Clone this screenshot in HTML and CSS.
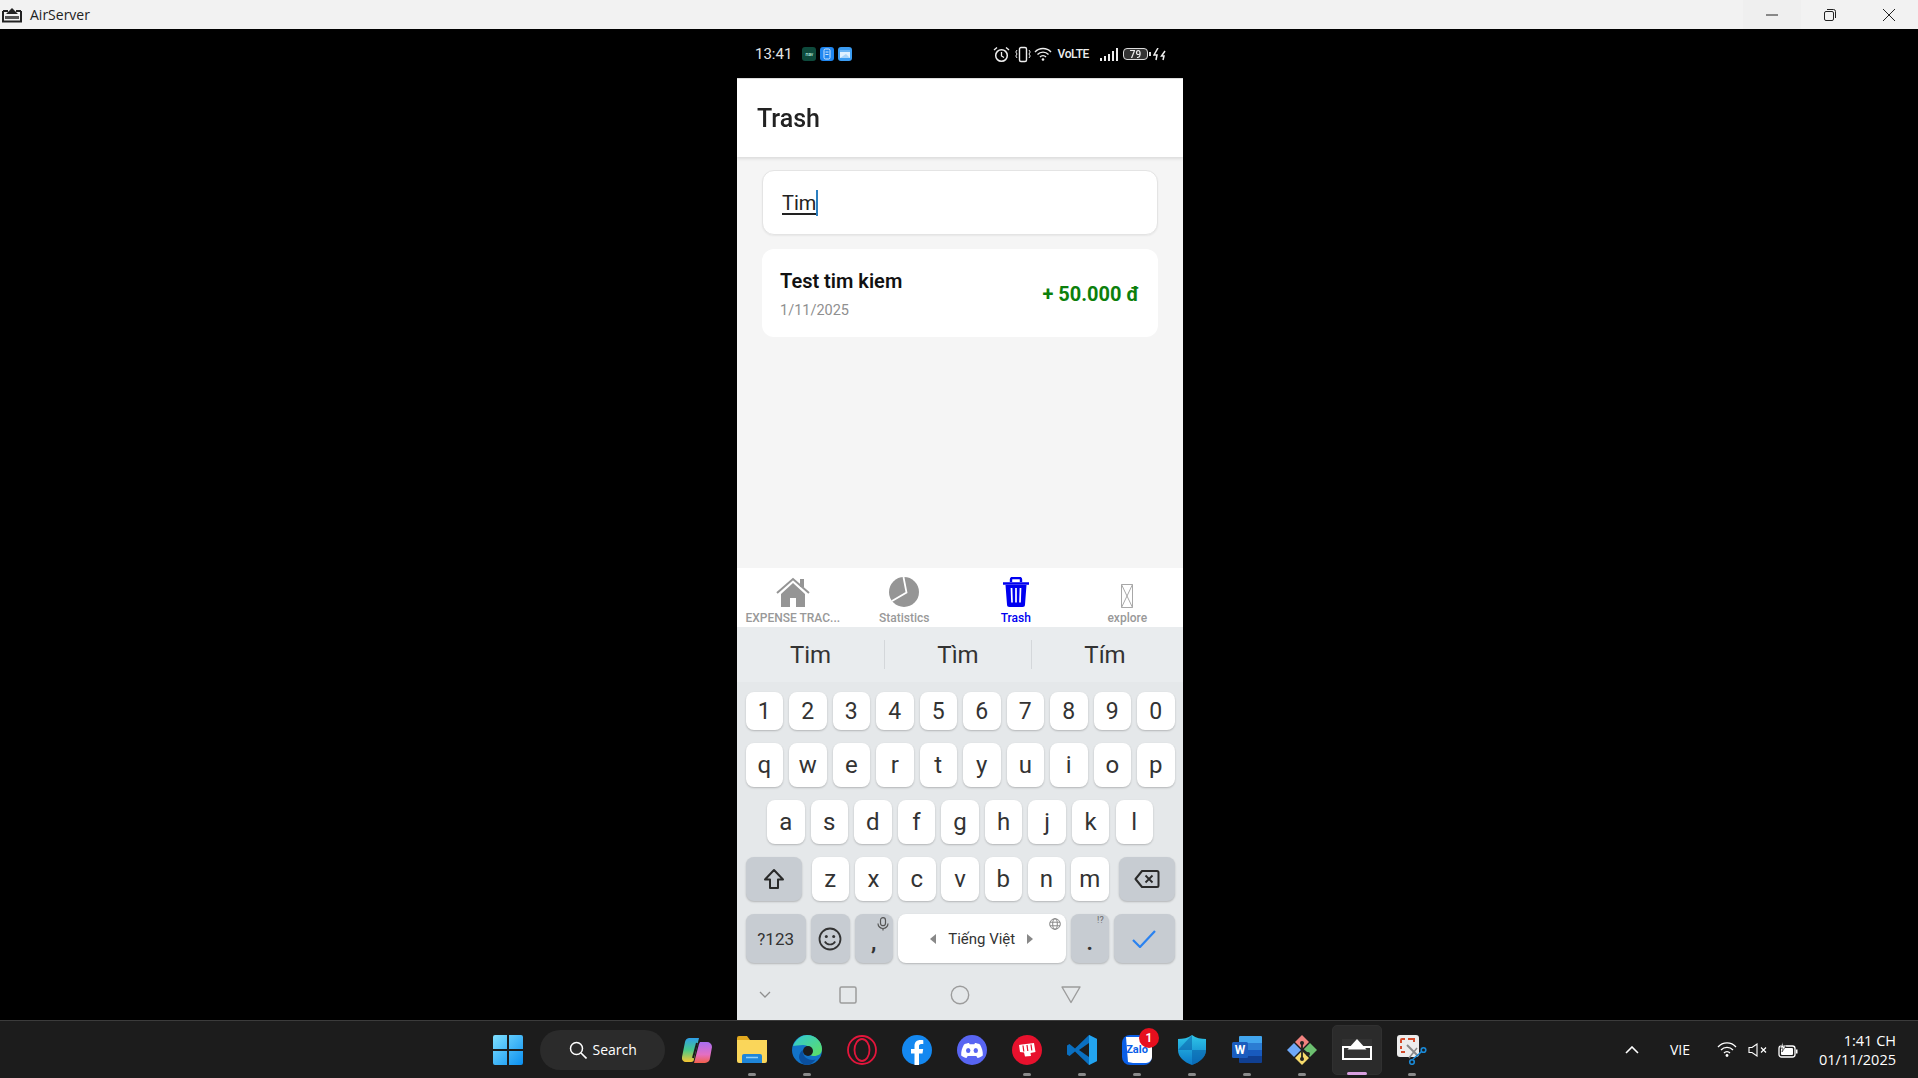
FILE: index.html
```html
<!DOCTYPE html>
<html lang="vi">
<head>
<meta charset="utf-8">
<title>AirServer</title>
<link rel="stylesheet" href="styles.css">
</head>
<body>
<div class="window">
  <header class="titlebar">
    <div class="title-left">
      <svg class="as-logo" viewBox="0 0 20 16" width="20" height="16"><path d="M1 4h5M14 4h5M1 4v10.500h18V4" fill="none" stroke="#222" stroke-width="2"/><path d="M10 1l6 6H4z" fill="#222"/><path d="M3 9h14v3H3z" fill="#555"/></svg>
      <span class="title-text">AirServer</span>
    </div>
    <div class="win-controls">
      <div class="win-btn win-min"><svg viewBox="0 0 12 12" width="12" height="12"><path d="M0 6h12" stroke="#222" stroke-width="1"/></svg></div>
      <div class="win-btn"><svg viewBox="0 0 12 12" width="12" height="12"><rect x=".5" y="2.500" width="9" height="9" rx="1.500" fill="none" stroke="#222"/><path d="M3 .5h6.500a2 2 0 0 1 2 2V9" fill="none" stroke="#222"/></svg></div>
      <div class="win-btn"><svg viewBox="0 0 12 12" width="12" height="12"><path d="M0 0l12 12M12 0L0 12" stroke="#222" stroke-width="1"/></svg></div>
    </div>
  </header>

  <main class="stage">
    <div class="phone">
      <div class="statusbar">
        <div class="status-left">
          <span class="status-time">13:41</span>
          <div class="app-icons">
            <span class="app-icon app-green">nav</span>
            <span class="app-icon app-blue"><svg viewBox="0 0 14 14" width="14" height="14"><rect x="4" y="2" width="6" height="10" rx="1.500" fill="none" stroke="#cfe6ff"/><path d="M5.500 5h3M5.500 7.500h3" stroke="#cfe6ff"/></svg></span>
            <span class="app-icon app-sky"><svg viewBox="0 0 14 14" width="14" height="14"><rect x="2" y="3" width="10" height="8" fill="#dff0ff"/><path d="M2 3h10v2H2z" fill="#6ab4f5"/><path d="M2 11l6-4 4 4z" fill="#a8d4fa"/></svg></span>
          </div>
        </div>
        <div class="status-right">
          <svg viewBox="0 0 17 17" width="17" height="17"><circle cx="8.500" cy="9.500" r="5.800" fill="none" stroke="#eee" stroke-width="1.500"/><path d="M8.500 6v4l2.500 1.500" fill="none" stroke="#eee" stroke-width="1.300"/><path d="M1 4l3-2.500M16 4l-3-2.500" stroke="#eee" stroke-width="1.400"/></svg>
          <svg class="st-vib" viewBox="0 0 16 17" width="16" height="17"><rect x="4.500" y="1.500" width="7" height="14" rx="1.500" fill="none" stroke="#eee" stroke-width="1.400"/><path d="M2 4L.8 6 2 8 .8 10 2 12M14 4l1.200 2L14 8l1.200 2L14 12" fill="none" stroke="#eee"/></svg>
          <svg viewBox="0 0 18 14" width="18" height="14"><path d="M1 5a11 11 0 0 1 16 0M3.500 7.500a7.500 7.500 0 0 1 11 0M6 10a4 4 0 0 1 6 0" fill="none" stroke="#eee" stroke-width="1.400"/><circle cx="9" cy="12.500" r="1.300" fill="#eee"/></svg>
          <span class="volte">VoLTE</span>
          <svg class="signal" viewBox="0 0 18 13" width="18" height="13"><path d="M0 10h2v3H0zM4 8h2v5H4zM8 6h2v7H8zM12 3h2v10h-2zM16 0h2v13h-2z" fill="#eee"/></svg>
          <span class="battery"><span class="battery-num">79</span></span>
          <svg viewBox="0 0 14 13" width="14" height="13"><path d="M5 0L1 7h3L3 12M12 3L8.500 8H11l-1 4" fill="none" stroke="#eee" stroke-width="1.500"/></svg>
        </div>
      </div>

      <div class="app-header"><h1 class="app-title">Trash</h1></div>

      <section class="content">
        <div class="search-box"><span class="search-text">Tim</span><span class="caret"></span></div>
        <article class="tx-card">
          <div class="tx-info">
            <div class="tx-title">Test tim kiem</div>
            <div class="tx-date">1/11/2025</div>
          </div>
          <div class="tx-amount">+ 50.000 đ</div>
        </article>
      </section>

      <nav class="tabs">
        <div class="tab">
          <svg viewBox="0 0 34 30" width="34" height="30"><path d="M5 17v13h9v-9h6v9h9V17L17 6z" fill="#959595"/><path d="M1 16L17 2l16 14" fill="none" stroke="#959595" stroke-width="2"/><path d="M24 2h4v8h-4z" fill="#959595"/></svg>
          <span class="tab-label">EXPENSE TRAC...</span>
        </div>
        <div class="tab">
          <svg viewBox="0 0 30 30" width="30" height="30"><circle cx="15" cy="15" r="15" fill="#959595"/><path d="M14.500 0l3 15.500L3 24" fill="none" stroke="#fff" stroke-width="1.800"/></svg>
          <span class="tab-label">Statistics</span>
        </div>
        <div class="tab tab-active">
          <svg viewBox="0 0 28 30" width="28" height="30"><path d="M1 6.500h26M9 5V2.500A1.500 1.500 0 0 1 10.500 1h7A1.500 1.500 0 0 1 19 2.500V5" fill="none" stroke="#0000f0" stroke-width="2.400"/><path d="M3.500 8h21l-1.500 19.500a2.500 2.500 0 0 1-2.500 2.500h-13A2.500 2.500 0 0 1 5 27.500z" fill="#0000f0"/><path d="M9.500 11l.5 14.500M14 11v14.500M18.500 11l-.5 14.500" stroke="#fff" stroke-width="1.700"/></svg>
          <span class="tab-label">Trash</span>
        </div>
        <div class="tab">
          <svg class="tab-missing" viewBox="0 0 12 24" width="12" height="24"><path d="M.5.500h11v23H.5zM.5.500l11 23M11.500.500l-11 23" fill="none" stroke="#a8a8a8"/></svg>
          <span class="tab-label">explore</span>
        </div>
      </nav>

      <div class="suggestions">
        <span class="suggestion">Tim</span>
        <span class="suggestion">Tìm</span>
        <span class="suggestion">Tím</span>
      </div>

      <div class="keyboard">
        <div class="key-row row-digits">
          <span class="key">1</span><span class="key">2</span><span class="key">3</span><span class="key">4</span><span class="key">5</span><span class="key">6</span><span class="key">7</span><span class="key">8</span><span class="key">9</span><span class="key">0</span>
        </div>
        <div class="key-row">
          <span class="key">q</span><span class="key">w</span><span class="key">e</span><span class="key">r</span><span class="key">t</span><span class="key">y</span><span class="key">u</span><span class="key">i</span><span class="key">o</span><span class="key">p</span>
        </div>
        <div class="key-row row-home">
          <span class="key">a</span><span class="key">s</span><span class="key">d</span><span class="key">f</span><span class="key">g</span><span class="key">h</span><span class="key">j</span><span class="key">k</span><span class="key">l</span>
        </div>
        <div class="key-row row-shift">
          <span class="key key-mod key-wide"><svg viewBox="0 0 22 22" width="22" height="22"><path d="M11 2L2 11.500h5V20h8v-8.500h5z" fill="none" stroke="#2a2a2a" stroke-width="2" stroke-linejoin="round"/></svg></span>
          <div class="letters">
            <span class="key">z</span><span class="key">x</span><span class="key">c</span><span class="key">v</span><span class="key">b</span><span class="key">n</span><span class="key">m</span>
          </div>
          <span class="key key-mod key-wide"><svg viewBox="0 0 26 20" width="26" height="20"><path d="M8 2h15a1.500 1.500 0 0 1 1.500 1.500v13A1.500 1.500 0 0 1 23 18H8L1.500 10z" fill="none" stroke="#2a2a2a" stroke-width="2" stroke-linejoin="round"/><path d="M11.500 6.500l7 7M18.500 6.500l-7 7" stroke="#2a2a2a" stroke-width="1.800"/></svg></span>
        </div>
        <div class="key-row row-bottom">
          <span class="key key-mod key-sym">?123</span>
          <span class="key key-mod key-emoji"><svg viewBox="0 0 24 24" width="24" height="24"><circle cx="12" cy="12" r="10.500" fill="none" stroke="#333" stroke-width="1.800"/><circle cx="8.300" cy="9.500" r="1.500" fill="#333"/><circle cx="15.700" cy="9.500" r="1.500" fill="#333"/><path d="M6.800 14.500a6 6 0 0 0 10.400 0" fill="none" stroke="#333" stroke-width="1.700"/></svg></span>
          <span class="key key-mod key-comma">,<svg class="hint-icon" viewBox="0 0 12 14" width="12" height="14"><rect x="3.500" y=".7" width="5" height="8" rx="2.500" fill="none" stroke="#555" stroke-width="1.200"/><path d="M1 6.500a5 5 0 0 0 10 0M6 11.500v2" fill="none" stroke="#555" stroke-width="1.200"/></svg></span>
          <span class="key key-space">
            <svg viewBox="0 0 6 10" width="6" height="10"><path d="M6 0v10L0 5z" fill="#888"/></svg>
            <span class="space-label">Tiếng Việt</span>
            <svg viewBox="0 0 6 10" width="6" height="10"><path d="M0 0v10l6-5z" fill="#888"/></svg>
            <svg class="hint-globe" viewBox="0 0 12 12" width="12" height="12"><circle cx="6" cy="6" r="5.300" fill="none" stroke="#888"/><ellipse cx="6" cy="6" rx="2.300" ry="5.300" fill="none" stroke="#888"/><path d="M1 4.200h10M1 7.800h10" stroke="#888"/></svg>
          </span>
          <span class="key key-mod key-period">.<span class="hint-text">!?</span></span>
          <span class="key key-mod key-done"><svg viewBox="0 0 24 18" width="24" height="18"><path d="M1 10l7 7L23 1" fill="none" stroke="#2a82f0" stroke-width="2.200"/></svg></span>
        </div>
      </div>

      <div class="navbar">
        <svg class="nav-chevron" viewBox="0 0 12 7" width="12" height="7"><path d="M1 1l5 5 5-5" fill="none" stroke="#8f8f8f" stroke-width="1.300"/></svg>
        <svg class="nav-square" viewBox="0 0 18 18" width="18" height="18"><rect x="1" y="1" width="16" height="16" rx="1.500" fill="none" stroke="#9c9c9c" stroke-width="1.500"/></svg>
        <svg class="nav-circle" viewBox="0 0 20 20" width="20" height="20"><circle cx="10" cy="10" r="8.700" fill="none" stroke="#9c9c9c" stroke-width="1.400"/></svg>
        <svg class="nav-tri" viewBox="0 0 20 18" width="20" height="18"><path d="M1 1h18L10 16.500z" fill="none" stroke="#9c9c9c" stroke-width="1.400" stroke-linejoin="round"/></svg>
      </div>
    </div>
  </main>

  <footer class="taskbar">
    <div class="task-center">
      <div class="task-app start"><svg viewBox="0 0 30 30" width="30" height="30"><defs><linearGradient id="w" x1="0" y1="0" x2="1" y2="1"><stop offset="0" stop-color="#7fe0ff"/><stop offset="1" stop-color="#0a8ff0"/></linearGradient></defs><path d="M0 2a2 2 0 0 1 2-2h12v14H0zM16 0h12a2 2 0 0 1 2 2v12H16zM0 16h14v14H2a2 2 0 0 1-2-2zM16 16h14v12a2 2 0 0 1-2 2H16z" fill="url(#w)"/></svg></div>
      <div class="task-search">
        <svg viewBox="0 0 18 18" width="18" height="18"><circle cx="7.500" cy="7.500" r="6" fill="none" stroke="#fff" stroke-width="1.500"/><path d="M12 12l5.500 5.500" stroke="#fff" stroke-width="1.600"/></svg>
        <span class="search-label">Search</span>
      </div>
      <div class="task-apps">
        <div class="task-app"><svg viewBox="0 0 30 26" width="30" height="26"><defs><linearGradient id="c1" x1="0" y1="0" x2="0" y2="1"><stop offset="0" stop-color="#2f9fe8"/><stop offset=".5" stop-color="#48c98a"/><stop offset="1" stop-color="#f7c530"/></linearGradient><linearGradient id="c2" x1="0" y1="0" x2="0" y2="1"><stop offset="0" stop-color="#a86ef0"/><stop offset=".6" stop-color="#e46fc2"/><stop offset="1" stop-color="#f25f4a"/></linearGradient></defs><path d="M7 1h10l-5 21a3 3 0 0 1-3 3H4a4 4 0 0 1-4-5l3-15a5 5 0 0 1 4-4z" fill="url(#c1)"/><path d="M18 5h7a5 5 0 0 1 5 5l-2 11a5 5 0 0 1-5 5H12l5-19z" fill="url(#c2)"/><path d="M15 6l-4 15" stroke="#1c1c1c" stroke-width="2"/></svg></div>
        <div class="task-app has-dot"><svg viewBox="0 0 30 27" width="30" height="27"><path d="M0 2a2 2 0 0 1 2-2h8l3 4h15v5H0z" fill="#e2a91f"/><path d="M0 4h30v21a2 2 0 0 1-2 2H2a2 2 0 0 1-2-2z" fill="#fad65a"/><path d="M5 20a2 2 0 0 1 2-2h16a2 2 0 0 1 2 2v7H5z" fill="#1f86d8"/><path d="M9 21.500h12" stroke="#8fd0f8" stroke-width="1.500"/></svg></div>
        <div class="task-app has-dot"><svg viewBox="0 0 30 30" width="30" height="30"><defs><linearGradient id="e1" x1="0" y1="0" x2="1" y2="1"><stop offset="0" stop-color="#30c8d8"/><stop offset="1" stop-color="#5fe060"/></linearGradient></defs><circle cx="15" cy="15" r="15" fill="#1273c8"/><path d="M1 11C4 3 11 0 15 0c9 0 15 7 15 14 0 5-4 7-8 7-3 0-5-1-4-3 2-3-1-8-7-8-4 0-8 1-10 1z" fill="url(#e1)"/><path d="M11 17c0 5 5 8 10 8 2 0 3-1 3-1-2 3-6 6-9 6-5 0-8-5-8-8 0-3 2-6 4-7z" fill="#0a4f9e"/><circle cx="16" cy="16" r="5" fill="#1c1c1c"/></svg></div>
        <div class="task-app"><svg viewBox="0 0 30 30" width="30" height="30"><circle cx="15" cy="15" r="14" fill="none" stroke="#e3163c" stroke-width="1.800"/><ellipse cx="15" cy="15" rx="7.500" ry="11" fill="none" stroke="#e3163c" stroke-width="1.800"/></svg></div>
        <div class="task-app"><svg viewBox="0 0 30 30" width="30" height="30"><circle cx="15" cy="15" r="15" fill="#1488f0"/><path d="M12.500 30V18.500H9v-4.500h3.500v-3c0-4 2.300-6 6-6 1.500 0 2.800.2 2.800.2v3.800h-2c-1.800 0-2.300 1-2.300 2.200V14h4.200l-.7 4.500h-3.500V30z" fill="#fff"/></svg></div>
        <div class="task-app"><svg viewBox="0 0 30 30" width="30" height="30"><circle cx="15" cy="15" r="15" fill="#5865f2"/><path d="M7 9.500c2-1 4-1.500 5-1.500l.7 1.300c1.500-.2 3-.2 4.600 0L18 8c1 0 3 .5 5 1.500 2 3.500 3 7 2.800 11-2 1.500-3.800 2.200-5.300 2.500l-1.200-2h-8.600l-1.200 2c-1.500-.3-3.300-1-5.300-2.500-.2-4 .8-7.500 2.800-11z" fill="#fff"/><ellipse cx="11.200" cy="15.500" rx="2.200" ry="2.500" fill="#5865f2"/><ellipse cx="18.800" cy="15.500" rx="2.200" ry="2.500" fill="#5865f2"/></svg></div>
        <div class="task-app has-dot"><svg viewBox="0 0 30 30" width="30" height="30"><circle cx="15" cy="15" r="15" fill="#e8112d"/><path d="M7 10l15-2 1.500 9-5 1 .5 3-6 .5-1-4-4-.5z" fill="#fff"/><path d="M11 10.500l.8 6M15 10l.8 6M19 9.500l.8 6" stroke="#e8112d" stroke-width="1.200"/></svg></div>
        <div class="task-app has-dot"><svg viewBox="0 0 30 30" width="30" height="30"><path d="M22 0l8 4v22l-8 4L8 16.500 2.500 21 0 19.500v-9L2.500 9 8 13.500z" fill="#0a6fc0"/><path d="M22 0l8 4v22l-8 4z" fill="#23a4ef"/><path d="M22 8L12 15l10 7z" fill="#1c1c1c"/></svg></div>
        <div class="task-app has-dot zalo"><svg viewBox="0 0 30 30" width="30" height="30"><path d="M8 0h14a8 8 0 0 1 8 8v14a8 8 0 0 1-8 8H8a8 8 0 0 1-8-8V8a8 8 0 0 1 8-8z" fill="#0a5fe8"/><path d="M4 2h21a5 5 0 0 1 5 5v15a6 6 0 0 1-6 6H11l-5-1z" fill="#fff"/><text class="zalo-text" x="15" y="18" text-anchor="middle">Zalo</text></svg><span class="badge">1</span></div>
        <div class="task-app has-dot"><svg viewBox="0 0 28 30" width="28" height="30"><defs><linearGradient id="d1" x1="0" y1="0" x2="0" y2="1"><stop offset="0" stop-color="#2fc6e8"/><stop offset="1" stop-color="#0a78c8"/></linearGradient></defs><path d="M14 0c4 3 9 4 14 4v11c0 7-6 12-14 15C6 27 0 22 0 15V4c5 0 10-1 14-4z" fill="url(#d1)"/><path d="M14 15h14c0 7-6 12-14 15zM0 15l14-15v15z" fill="#0a5ea8" opacity=".55"/></svg></div>
        <div class="task-app has-dot"><svg viewBox="0 0 30 27" width="30" height="27"><path d="M7 1a1 1 0 0 1 1-1h21a1 1 0 0 1 1 1v6H7z" fill="#41a5ee"/><path d="M7 7h23v7H7z" fill="#2b7cd3"/><path d="M7 14h23v6H7z" fill="#185abd"/><path d="M7 20h23v6a1 1 0 0 1-1 1H8a1 1 0 0 1-1-1z" fill="#103f91"/><rect x="0" y="6" width="16" height="16" rx="1.500" fill="#1a5cbe"/><text class="word-text" x="8" y="18" text-anchor="middle">W</text></svg></div>
        <div class="task-app has-dot"><svg viewBox="0 0 30 30" width="30" height="30"><path d="M15 0l7 7-7 7-7-7z" fill="#f0827f"/><path d="M0 15l7-7 7 7-7 7z" fill="#6ea8f7"/><path d="M30 15l-7-7-7 7 7 7z" fill="#6cc070"/><path d="M15 30l-7-7 7-7 7 7z" fill="#f5d96b"/><path d="M15 8v16M15 14l6 5" stroke="#222" stroke-width="1.800"/><circle cx="15" cy="8" r="2" fill="#222"/><circle cx="15" cy="24" r="2" fill="#222"/><circle cx="21" cy="19" r="2" fill="#222"/></svg></div>
        <div class="task-app task-active"><svg viewBox="0 0 30 21" width="30" height="21"><rect width="30" height="21" fill="#333"/><path d="M1 8h8M21 8h8M1 7v13h28V7" fill="none" stroke="#fff" stroke-width="2"/><path d="M15 0l9.500 10.500h-19z" fill="#fff"/></svg><span class="active-bar"></span></div>
        <div class="task-app has-dot"><svg viewBox="0 0 30 30" width="30" height="30"><rect width="22" height="22" rx="3" fill="#ececec"/><path d="M4 8V5a1 1 0 0 1 1-1h3M11 4h3M4 11v3M4 17h4M14 4h3v3" fill="none" stroke="#d44a2a" stroke-width="2"/><path d="M10 10l11 11" stroke="#888" stroke-width="2"/><path d="M20 13l-8 10" stroke="#888" stroke-width="1.500"/><circle cx="26.500" cy="15" r="2.300" fill="none" stroke="#1a8ad8" stroke-width="1.600"/><circle cx="15" cy="27" r="2.300" fill="none" stroke="#1a8ad8" stroke-width="1.600"/><path d="M16 24l6-5 3-3" stroke="#1a8ad8" stroke-width="1.600" fill="none"/></svg></div>
      </div>
    </div>
    <div class="tray">
      <svg class="tray-chev" viewBox="0 0 14 8" width="14" height="8"><path d="M1 7l6-6 6 6" fill="none" stroke="#fff" stroke-width="1.600"/></svg>
      <span class="tray-lang">VIE</span>
      <svg class="tray-wifi" viewBox="0 0 20 15" width="20" height="15"><path d="M1 5a12 12 0 0 1 18 0M4 8a8 8 0 0 1 12 0M7 11a4 4 0 0 1 6 0" fill="none" stroke="#fff" stroke-width="1.300"/><circle cx="10" cy="13.500" r="1.400" fill="#fff"/></svg>
      <svg class="tray-vol" viewBox="0 0 20 14" width="20" height="14"><path d="M1 4.500h3L9 1v12L4 9.500H1z" fill="none" stroke="#fff" stroke-width="1.100"/><path d="M13 4.500l5 5M18 4.500l-5 5" stroke="#fff" stroke-width="1.200"/></svg>
      <svg class="tray-bat" viewBox="0 0 20 16" width="20" height="16"><rect x="1" y="4" width="16" height="11" rx="2.500" fill="none" stroke="#fff" stroke-width="1.300"/><rect x="3" y="6" width="12" height="7" rx="1" fill="#fff"/><path d="M18 7.500h1.500v4H18z" fill="#fff"/><path d="M5 0L2 6h3l-1 4 4-6H5z" fill="#fff" stroke="#1c1c1c" stroke-width=".6"/></svg>
      <div class="clock"><div>1:41 CH</div><div>01/11/2025</div></div>
    </div>
  </footer>
</div>
</body>
</html>
```

FILE: styles.css
```css
* { box-sizing: border-box; }
html, body { margin: 0; height: 100%; }
body { font-family: Roboto, "Liberation Sans", sans-serif; background: #000; overflow: hidden; }
.window { display: flex; flex-direction: column; width: 1918px; height: 1078px; }

/* Title bar */
.titlebar { height: 29px; flex: none; background: #f2f2f2; display: flex; align-items: center; justify-content: space-between; }
.title-left { display: flex; align-items: center; gap: 8px; padding-left: 2px; }
.title-text { font-family: "Open Sans", "Noto Sans", sans-serif; font-size: 14px; color: #222; }
.win-controls { display: flex; }
.win-btn { width: 58.500px; height: 29px; display: flex; align-items: center; justify-content: center; }
.win-min { background: #efefef; }

/* Stage + phone */
.stage { flex: 1; min-height: 0; background: #000; display: flex; justify-content: center; padding-left: 2px; }
.phone { width: 446px; height: 991px; display: flex; flex-direction: column; filter: blur(.4px); }

.statusbar { height: 49px; flex: none; background: #000; display: flex; align-items: center; justify-content: space-between; padding: 1px 16px 0 18px; color: #eee; }
.status-left { display: flex; align-items: center; gap: 10px; }
.status-time { font-size: 15px; color: #e4e4e4; }
.app-icons { display: flex; gap: 4px; }
.app-icon { width: 14px; height: 14px; border-radius: 3px; display: flex; align-items: center; justify-content: center; overflow: hidden; }
.app-green { background: #0e4a3c; color: #cfe; font-size: 5px; }
.app-blue { background: #1f86f0; }
.app-sky { background: #3b9cf2; }
.status-right { display: flex; align-items: center; gap: 5px; }
.st-vib { margin-right: -2px; }
.volte { font-size: 12px; font-weight: 500; color: #eee; margin: 0 6px 0 1px; letter-spacing: -.4px; }
.signal { margin-right: 0; }
.battery { width: 25px; height: 12px; border: 1.300px solid #ddd; border-radius: 4px; display: flex; align-items: center; justify-content: center; background: #333; position: relative; }
.battery::after { content: ""; position: absolute; right: -4px; top: 3px; width: 2px; height: 4px; background: #ddd; }
.battery-num { font-size: 10px; font-weight: 500; color: #eee; }

.app-header { height: 79px; flex: none; background: #fff; display: flex; align-items: center; padding: 1px 0 0 20px; border-top: 1px solid #ddd; box-shadow: 0 2px 3px rgba(0,0,0,.1); position: relative; }
.app-title { margin: 0; font-size: 25px; font-weight: 500; color: #222; }

.content { flex: 1; min-height: 0; background: #f5f5f5; padding: 13px 25px 0; display: flex; flex-direction: column; gap: 14px; }
.search-box { height: 65px; background: #fff; border: 1px solid #e4e4e4; border-radius: 12px; display: flex; align-items: center; padding: 1px 0 0 19px; box-shadow: 0 1px 2px rgba(0,0,0,.06); }
.search-text { font-size: 20px; color: #222; text-decoration: underline; text-underline-offset: 3px; }
.caret { width: 2px; height: 26px; background: #2b7fc0; }
.tx-card { height: 88px; background: #fff; border-radius: 12px; display: flex; align-items: center; justify-content: space-between; padding: 0 19px 0 18px; }
.tx-info { display: flex; flex-direction: column; gap: 9px; padding-top: 2px; }
.tx-title { font-size: 20px; font-weight: 600; color: #111; line-height: 24px; }
.tx-date { font-size: 14.500px; color: #8f8f8f; line-height: 18px; }
.tx-amount { font-size: 20px; font-weight: 700; color: #0c7f0c; padding-top: 2px; }

/* Tabs */
.tabs { height: 59px; flex: none; background: #fff; display: grid; grid-template-columns: repeat(4, 1fr); }
.tab { display: flex; flex-direction: column; align-items: center; justify-content: flex-end; height: 59px; padding-bottom: 2px; color: #999; }
.tab svg { display: block; margin-bottom: 4px; }
.tab-missing { margin-bottom: 3px !important; }
.tab-label { font-size: 12px; font-weight: 500; line-height: 14px; color: #999; white-space: nowrap; }
.tab-active .tab-label { color: #0000f0; }

/* Suggestions */
.suggestions { height: 55px; flex: none; background: #e9ecee; display: grid; grid-template-columns: repeat(3, 147px); align-items: center; }
.suggestion { font-size: 24px; color: #333; text-align: center; line-height: 28px; padding-top: 1px; border-left: 1px solid #d4d7da; }
.suggestion:first-child { border-left: 0; }

/* Keyboard */
.keyboard { flex: none; background: #e5e8ea; padding: 10px 8.500px 0; display: flex; flex-direction: column; gap: 13.500px; }
.key-row { display: flex; justify-content: space-between; height: 43.500px; }
.row-digits { height: 37.500px; }
.row-home { padding: 0 21.500px; }
.row-bottom { height: 49px; gap: 5px; justify-content: flex-start; }
.key { width: 37.500px; background: #fff; border-radius: 8px; box-shadow: 0 1px 2px rgba(0,0,0,.22); display: flex; align-items: center; justify-content: center; padding-top: 1px; font-size: 24px; color: #333; position: relative; }
.row-digits .key { font-size: 23px; }
.key-mod { background: #c7ccd2; }
.key-wide { width: 56px; }
.letters { flex: 1; display: flex; justify-content: space-between; padding: 0 10px; }
.key-sym { width: 60.500px; font-size: 17px; }
.key-emoji { width: 39px; }
.key-comma, .key-period { width: 38px; font-size: 22px; font-weight: 700; padding-top: 8px; }
.key-space { flex: none; width: 168px; gap: 12px; }
.space-label { font-size: 15px; color: #333; }
.key-done { width: 61px; }
.hint-icon { position: absolute; top: 3px; right: 4px; }
.hint-globe { position: absolute; top: 4px; right: 5px; }
.hint-text { position: absolute; top: 1px; right: 5px; font-size: 9px; font-weight: 400; color: #666; }

.navbar { flex: none; height: 57px; background: #e5e8ea; display: flex; align-items: center; padding: 6px 0 0 22px; }
.nav-square { margin-left: 68px; }
.nav-circle { margin-left: 93px; }
.nav-tri { margin-left: 91px; }

/* Taskbar */
.taskbar { height: 58px; flex: none; background: #1c1c1c; border-top: 1px solid #3b3b3b; display: flex; align-items: center; position: relative; font-family: "Open Sans", "Noto Sans", sans-serif; color: #fff; padding-left: 480px; }
.task-center { display: flex; align-items: center; }
.task-app { width: 55px; height: 50px; display: flex; align-items: center; justify-content: center; position: relative; flex: none; }
.start { margin-right: -27.500px; }
.task-search { width: 125px; height: 40px; margin-left: 32px; background: #2b2b2b; border-radius: 20px; display: flex; align-items: center; gap: 6px; padding-left: 29px; }
.search-label { font-size: 14px; }
.task-apps { display: flex; margin-left: 4.500px; }
.has-dot::after { content: ""; position: absolute; left: 50%; bottom: -1px; width: 8px; height: 3px; margin-left: -4px; border-radius: 2px; background: #8a8a8a; }
.task-active { background: #2b2b2b; border-radius: 5px; width: 50px; margin: 0 2.500px; border: 1px solid #303030; }
.active-bar { position: absolute; left: 50%; bottom: -1px; width: 20px; height: 3px; margin-left: -10px; border-radius: 2px; background: #d9a0e0; }
.badge { position: absolute; left: 30px; top: 3px; width: 20px; height: 20px; border-radius: 50%; background: #e60f1e; color: #fff; font-size: 12px; font-weight: 600; display: flex; align-items: center; justify-content: center; font-family: Roboto, sans-serif; }
.zalo-text { font-family: Roboto, sans-serif; font-size: 11px; font-weight: 700; fill: #0a5fe8; }
.word-text { font-family: Roboto, sans-serif; font-size: 12px; font-weight: 700; fill: #fff; }

.tray { margin-left: auto; display: flex; align-items: center; height: 100%; padding-right: 22px; }
.tray-chev { margin-right: 30.500px; }
.tray-lang { font-size: 14px; margin-right: 27px; }
.tray-wifi { margin-right: 11px; }
.tray-vol { margin-right: 10px; }
.tray-bat { margin-right: 21px; }
.clock { font-size: 14.500px; line-height: 19px; text-align: right; }
```
